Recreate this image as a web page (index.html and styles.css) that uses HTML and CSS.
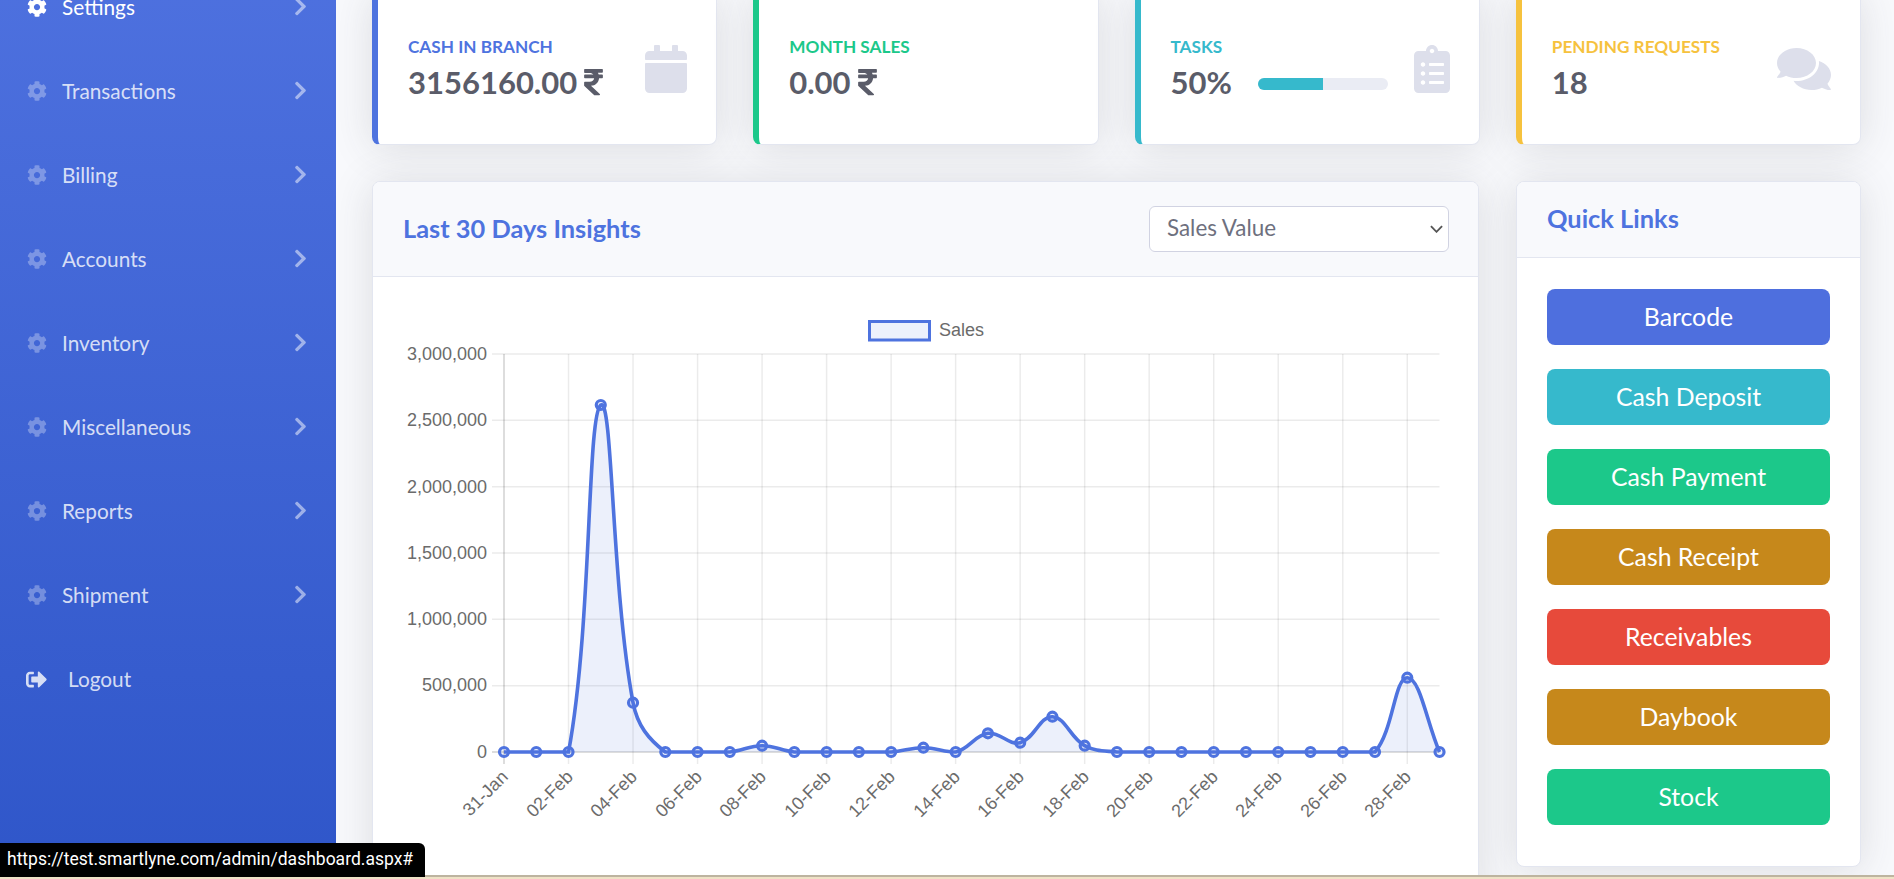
FILE: index.html
```html
<!DOCTYPE html>
<html lang="en">
<head>
<meta charset="utf-8">
<title>Dashboard</title>
<link rel="stylesheet" href="styles.css">
</head>
<body>
<svg class="defs" width="0" height="0" aria-hidden="true">
  <symbol id="i-cog" viewBox="0 0 512 512"><path d="M487.4 315.7l-42.6-24.6c4.3-23.2 4.3-47 0-70.2l42.6-24.6c4.9-2.8 7.1-8.6 5.5-14-11.1-35.6-30-67.8-54.7-94.6-3.8-4.1-10-5.1-14.8-2.3L380.8 110c-17.9-15.4-38.5-27.3-60.8-35.1V25.8c0-5.6-3.9-10.5-9.4-11.7-36.7-8.2-74.3-7.8-109.2 0-5.5 1.2-9.4 6.1-9.4 11.7V75c-22.2 7.9-42.8 19.8-60.8 35.1L88.7 85.5c-4.9-2.8-11-1.9-14.8 2.3-24.7 26.7-43.6 58.9-54.7 94.6-1.7 5.4.6 11.2 5.5 14L67.3 221c-4.3 23.2-4.3 47 0 70.2l-42.6 24.6c-4.9 2.8-7.1 8.6-5.5 14 11.1 35.6 30 67.8 54.7 94.6 3.8 4.1 10 5.1 14.8 2.3l42.6-24.6c17.9 15.4 38.5 27.3 60.8 35.1v49.2c0 5.6 3.9 10.5 9.4 11.7 36.7 8.2 74.3 7.8 109.2 0 5.5-1.2 9.4-6.1 9.4-11.7v-49.2c22.2-7.9 42.8-19.8 60.8-35.1l42.6 24.6c4.9 2.8 11 1.9 14.8-2.3 24.7-26.7 43.6-58.9 54.7-94.6 1.5-5.5-.7-11.3-5.6-14.1zM256 336c-44.1 0-80-35.9-80-80s35.9-80 80-80 80 35.9 80 80-35.9 80-80 80z"/></symbol>
  <symbol id="i-chev" viewBox="0 0 320 512"><path d="M285.476 272.971L91.132 467.314c-9.373 9.373-24.569 9.373-33.941 0l-22.667-22.667c-9.357-9.357-9.375-24.522-.04-33.901L188.505 256 34.484 101.255c-9.335-9.379-9.317-24.544.04-33.901l22.667-22.667c9.373-9.373 24.569-9.373 33.941 0L285.475 239.03c9.373 9.372 9.373 24.568.001 33.941z"/></symbol>
  <symbol id="i-out" viewBox="0 0 512 512"><path d="M497 273L329 441c-15 15-41 4.5-41-17v-96H152c-13.3 0-24-10.7-24-24v-96c0-13.3 10.7-24 24-24h136V88c0-21.4 25.9-32 41-17l168 168c9.3 9.4 9.3 24.6 0 34zM192 436v-40c0-6.6-5.4-12-12-12H96c-17.7 0-32-14.3-32-32V160c0-17.7 14.3-32 32-32h84c6.6 0 12-5.4 12-12V76c0-6.6-5.4-12-12-12H96c-53 0-96 43-96 96v192c0 53 43 96 96 96h84c6.6 0 12-5.4 12-12z"/></symbol>
  <symbol id="i-rupee" viewBox="0 0 320 512"><path d="M308 96c6.627 0 12-5.373 12-12V44c0-6.627-5.373-12-12-12H12C5.373 32 0 37.373 0 44v44.748c0 6.627 5.373 12 12 12h85.28c27.308 0 48.261 9.958 60.97 27.252H12c-6.627 0-12 5.373-12 12v40c0 6.627 5.373 12 12 12h158.757c-6.217 36.086-32.961 58.632-74.757 58.632H12c-6.627 0-12 5.373-12 12v53.012c0 3.349 1.4 6.546 3.861 8.818l165.052 152.356a12.001 12.001 0 0 0 8.139 3.182h82.562c10.924 0 16.166-13.408 8.139-20.818L116.871 319.906c76.499-2.34 131.144-53.395 138.318-127.906H308c6.627 0 12-5.373 12-12v-40c0-6.627-5.373-12-12-12h-58.69c-3.486-11.541-8.28-22.246-14.252-32H308z"/></symbol>
  <symbol id="i-cal" viewBox="0 0 448 512"><path d="M12 192h424c6.6 0 12 5.4 12 12v260c0 26.5-21.5 48-48 48H48c-26.5 0-48-21.5-48-48V204c0-6.6 5.4-12 12-12zm436-44v-36c0-26.5-21.5-48-48-48h-48V12c0-6.6-5.4-12-12-12h-40c-6.6 0-12 5.4-12 12v52H160V12c0-6.6-5.4-12-12-12h-40c-6.6 0-12 5.4-12 12v52H48C21.5 64 0 85.5 0 112v36c0 6.6 5.4 12 12 12h424c6.6 0 12-5.4 12-12z"/></symbol>
  <symbol id="i-clip" viewBox="0 0 384 512"><path d="M336 64h-80c0-35.3-28.7-64-64-64s-64 28.7-64 64H48C21.5 64 0 85.5 0 112v352c0 26.5 21.5 48 48 48h288c26.5 0 48-21.5 48-48V112c0-26.5-21.5-48-48-48zM96 424c-13.3 0-24-10.7-24-24s10.7-24 24-24 24 10.7 24 24-10.7 24-24 24zm0-96c-13.3 0-24-10.7-24-24s10.7-24 24-24 24 10.7 24 24-10.7 24-24 24zm0-96c-13.3 0-24-10.7-24-24s10.7-24 24-24 24 10.7 24 24-10.7 24-24 24zm96-192c13.3 0 24 10.7 24 24s-10.7 24-24 24-24-10.7-24-24 10.7-24 24-24zm128 368c0 4.4-3.6 8-8 8H168c-4.4 0-8-3.6-8-8v-16c0-4.4 3.6-8 8-8h144c4.4 0 8 3.6 8 8v16zm0-96c0 4.4-3.6 8-8 8H168c-4.4 0-8-3.6-8-8v-16c0-4.4 3.6-8 8-8h144c4.4 0 8 3.6 8 8v16zm0-96c0 4.4-3.6 8-8 8H168c-4.4 0-8-3.6-8-8v-16c0-4.4 3.6-8 8-8h144c4.4 0 8 3.6 8 8v16z"/></symbol>
  <symbol id="i-com" viewBox="0 0 576 512"><path d="M416 192c0-88.4-93.1-160-208-160S0 103.6 0 192c0 34.3 14.1 65.9 38 92-13.4 30.2-35.5 54.2-35.8 54.5-2.2 2.3-2.8 5.7-1.5 8.7S4.8 352 8 352c36.6 0 66.9-12.3 88.7-25 32.2 15.7 70.3 25 111.3 25 114.9 0 208-71.6 208-160zm122 220c23.9-26 38-57.7 38-92 0-66.9-53.5-124.2-129.3-148.1.9 6.6 1.3 13.3 1.3 20.1 0 105.9-107.7 192-240 192-10.8 0-21.3-.8-31.7-1.9C207.8 439.6 281.8 480 368 480c41 0 79.1-9.2 111.3-25 21.8 12.7 52.1 25 88.7 25 3.2 0 6.1-1.9 7.3-4.8 1.3-2.9.7-6.3-1.5-8.7-.3-.3-22.4-24.2-35.8-54.5z"/></symbol>
</svg>

<div class="app">
  <nav class="sidebar">
    <a class="nav-item active" href="#"><svg class="nav-icon"><use href="#i-cog"/></svg><span class="nav-text">Settings</span><svg class="nav-chev"><use href="#i-chev"/></svg></a>
    <a class="nav-item" href="#"><svg class="nav-icon"><use href="#i-cog"/></svg><span class="nav-text">Transactions</span><svg class="nav-chev"><use href="#i-chev"/></svg></a>
    <a class="nav-item" href="#"><svg class="nav-icon"><use href="#i-cog"/></svg><span class="nav-text">Billing</span><svg class="nav-chev"><use href="#i-chev"/></svg></a>
    <a class="nav-item" href="#"><svg class="nav-icon"><use href="#i-cog"/></svg><span class="nav-text">Accounts</span><svg class="nav-chev"><use href="#i-chev"/></svg></a>
    <a class="nav-item" href="#"><svg class="nav-icon"><use href="#i-cog"/></svg><span class="nav-text">Inventory</span><svg class="nav-chev"><use href="#i-chev"/></svg></a>
    <a class="nav-item" href="#"><svg class="nav-icon"><use href="#i-cog"/></svg><span class="nav-text">Miscellaneous</span><svg class="nav-chev"><use href="#i-chev"/></svg></a>
    <a class="nav-item" href="#"><svg class="nav-icon"><use href="#i-cog"/></svg><span class="nav-text">Reports</span><svg class="nav-chev"><use href="#i-chev"/></svg></a>
    <a class="nav-item" href="#"><svg class="nav-icon"><use href="#i-cog"/></svg><span class="nav-text">Shipment</span><svg class="nav-chev"><use href="#i-chev"/></svg></a>
    <a class="nav-item logout" href="#"><svg class="nav-icon-out"><use href="#i-out"/></svg><span class="nav-text">Logout</span></a>
  </nav>

  <main class="main">
    <section class="stats">
      <div class="stat stat-blue">
        <div class="stat-body">
          <div class="stat-label">Cash in branch</div>
          <div class="stat-value">3156160.00 <svg class="rupee"><use href="#i-rupee"/></svg></div>
        </div>
        <svg class="stat-icon w42"><use href="#i-cal"/></svg>
      </div>
      <div class="stat stat-green">
        <div class="stat-body">
          <div class="stat-label">Month Sales</div>
          <div class="stat-value">0.00 <svg class="rupee"><use href="#i-rupee"/></svg></div>
        </div>
      </div>
      <div class="stat stat-teal">
        <div class="stat-body">
          <div class="stat-label">Tasks</div>
          <div class="stat-row">
            <div class="stat-value">50%</div>
            <div class="progress"><div class="progress-bar"></div></div>
          </div>
        </div>
        <svg class="stat-icon w36"><use href="#i-clip"/></svg>
      </div>
      <div class="stat stat-yellow">
        <div class="stat-body">
          <div class="stat-label">Pending Requests</div>
          <div class="stat-value">18</div>
        </div>
        <svg class="stat-icon w54"><use href="#i-com"/></svg>
      </div>
    </section>

    <section class="panels">
      <div class="panel panel-chart">
        <header class="panel-head chart-head">
          <h2 class="panel-title">Last 30 Days Insights</h2>
          <div class="select-wrap">
            <select class="select"><option>Sales Value</option></select>
            <svg class="select-chev" viewBox="0 0 14 8"><polyline points="1,1 7,7 13,1"/></svg>
          </div>
        </header>
        <div class="chart-wrap">
          <svg id="chart" class="chart" width="1107" height="598" viewBox="372 277 1107 598">
            <g id="grid"></g>
            <g id="series"></g>
            <rect class="legend-box" x="869.5" y="321.5" width="60" height="18.5"/>
            <text class="legend-text" x="939" y="336">Sales</text>
            <g class="y-labels">
              <text x="487" y="360">3,000,000</text>
              <text x="487" y="426">2,500,000</text>
              <text x="487" y="493">2,000,000</text>
              <text x="487" y="559">1,500,000</text>
              <text x="487" y="625">1,000,000</text>
              <text x="487" y="691">500,000</text>
              <text x="487" y="758">0</text>
            </g>
            <g class="x-labels">
              <text transform="translate(509 778) rotate(-45)">31-Jan</text>
              <text transform="translate(574 778) rotate(-45)">02-Feb</text>
              <text transform="translate(638 778) rotate(-45)">04-Feb</text>
              <text transform="translate(703 778) rotate(-45)">06-Feb</text>
              <text transform="translate(767 778) rotate(-45)">08-Feb</text>
              <text transform="translate(832 778) rotate(-45)">10-Feb</text>
              <text transform="translate(896 778) rotate(-45)">12-Feb</text>
              <text transform="translate(961 778) rotate(-45)">14-Feb</text>
              <text transform="translate(1025 778) rotate(-45)">16-Feb</text>
              <text transform="translate(1090 778) rotate(-45)">18-Feb</text>
              <text transform="translate(1154 778) rotate(-45)">20-Feb</text>
              <text transform="translate(1219 778) rotate(-45)">22-Feb</text>
              <text transform="translate(1283 778) rotate(-45)">24-Feb</text>
              <text transform="translate(1348 778) rotate(-45)">26-Feb</text>
              <text transform="translate(1412 778) rotate(-45)">28-Feb</text>
            </g>
          </svg>
        </div>
      </div>

      <aside class="panel panel-links">
        <header class="panel-head links-head">
          <h2 class="panel-title">Quick Links</h2>
        </header>
        <div class="links">
          <a class="btn btn-primary" href="#">Barcode</a>
          <a class="btn btn-info" href="#">Cash Deposit</a>
          <a class="btn btn-success" href="#">Cash Payment</a>
          <a class="btn btn-warning" href="#">Cash Receipt</a>
          <a class="btn btn-danger" href="#">Receivables</a>
          <a class="btn btn-warning" href="#">Daybook</a>
          <a class="btn btn-success" href="#">Stock</a>
        </div>
      </aside>
    </section>
  </main>
</div>

<div class="status-url">https://test.smartlyne.com/admin/dashboard.aspx#</div>
<div class="desk-strip"></div>
<script src="chart.js"></script>
</body>
</html>
```

FILE: styles.css
```css
* { box-sizing: border-box; }
html, body { margin: 0; height: 879px; overflow: hidden; }
body {
  font-family: "Lato", "Noto Sans", sans-serif;
  background: #f8f9fc;
  color: #5a5c69;
}
a { text-decoration: none; }
.defs { display: block; height: 0; }

.app { display: flex; height: 879px; }

/* sidebar */
.sidebar {
  width: 336px;
  flex: none;
  background: linear-gradient(180deg, #4e71df 0%, #2f56c9 100%);
  margin-top: -35px;
  padding-left: 27px;
  padding-right: 29px;
  height: 914px;
}
.nav-item {
  display: flex;
  align-items: center;
  height: 84px;
  color: rgba(255,255,255,.8);
  font-size: 20.8px;
}
.nav-icon { width: 20px; height: 20px; fill: rgba(255,255,255,.3); margin-right: 15px; flex: none; }
.nav-text { flex: 1; padding-bottom: 1px; }
.nav-chev { width: 13px; height: 21px; fill: rgba(255,255,255,.5); flex: none; margin-top: -2px; }
.nav-item.active { color: #fff; }
.nav-item.active .nav-icon { fill: #fff; }
.nav-icon-out { width: 21px; height: 21px; fill: rgba(255,255,255,.8); margin-right: 21px; margin-left: -1px; flex: none; }

/* main */
.main {
  flex: 1;
  min-width: 0;
  padding: 0 33px 0 36px;
  margin-top: -8px;
}
.stats {
  display: grid;
  grid-template-columns: repeat(4, 1fr);
  gap: 36px;
}
.stat {
  height: 153px;
  background: #fff;
  border: 1px solid #e3e6f0;
  border-left-width: 6px;
  border-radius: 8px;
  box-shadow: 0 3px 42px rgba(58,59,69,.15);
  display: flex;
  align-items: center;
  padding: 0 29px 0 30px;
}
.stat-blue { border-left-color: #4e73df; }
.stat-green { border-left-color: #1cc88a; }
.stat-teal { border-left-color: #36b9cc; }
.stat-yellow { border-left-color: #f6c23e; }
.stat-body { flex: 1; min-width: 0; }
.stat-label {
  font-size: 17.2px;
  font-weight: 700;
  text-transform: uppercase;
  line-height: 20px;
  margin-bottom: 7px;
}
.stat-blue .stat-label { color: #4e73df; }
.stat-green .stat-label { color: #1cc88a; }
.stat-teal .stat-label { color: #36b9cc; }
.stat-yellow .stat-label { color: #f6c23e; }
.stat-value {
  font-size: 31px;
  font-weight: 700;
  line-height: 36px;
  color: #5a5c69;
  display: flex;
  align-items: center;
  gap: 7px;
}
.rupee { width: 19px; height: 30px; fill: #5a5c69; flex: none; }
.stat-row { display: flex; align-items: center; gap: 26px; }
.progress { width: 130px; height: 12px; background: #eaecf4; border-radius: 6px; overflow: hidden; margin-top: 3px; }
.progress-bar { width: 50%; height: 100%; background: #36b9cc; }
.stat-icon { height: 48px; fill: #dddfeb; flex: none; }
.w42 { width: 42px; }
.w36 { width: 36px; }
.w54 { width: 54px; }

/* panels */
.panels {
  display: grid;
  grid-template-columns: 1107px 345px;
  gap: 37px;
  margin-top: 36px;
  align-items: start;
}
.panel {
  background: #fff;
  border: 1px solid #e3e6f0;
  border-radius: 8px;
  box-shadow: 0 3px 42px rgba(58,59,69,.15);
  overflow: hidden;
}
.panel-chart { height: 760px; }
.panel-links { height: 686px; }
.panel-head {
  background: #f8f9fc;
  border-bottom: 1px solid #e3e6f0;
  display: flex;
  align-items: center;
  justify-content: space-between;
  padding: 0 30px;
}
.chart-head { height: 95px; }
.links-head { height: 76px; }
.panel-title { margin: 0 0 3px; font-size: 25.4px; font-weight: 700; color: #4e73df; }
.select-wrap { position: relative; width: 300px; height: 46px; margin-right: -1px; }
.select {
  appearance: none;
  -webkit-appearance: none;
  display: block;
  width: 100%;
  height: 100%;
  font-family: inherit;
  font-size: 22.4px;
  color: #6e707e;
  background: #fff;
  border: 1.5px solid #d1d3e2;
  border-radius: 6px;
  padding: 0 0 3px 17px;
}
.select-chev {
  position: absolute;
  right: 6px;
  top: 19px;
  width: 13px;
  height: 8px;
  fill: none;
  stroke: #555;
  stroke-width: 2;
  pointer-events: none;
}
.chart-wrap { height: 598px; margin-left: -1px; }
.chart { display: block; }
#chart text { font-family: "Liberation Sans", Arial, sans-serif; font-size: 18px; fill: #6b6b6b; }
.y-labels text { text-anchor: end; }
.x-labels text { text-anchor: end; }
.legend-box { fill: rgba(78,115,223,.1); stroke: #4e73df; stroke-width: 3; }
.grid-line { stroke: rgba(0,0,0,.08); stroke-width: 1.5; }
.axis-line { stroke: rgba(0,0,0,.18); stroke-width: 1.5; }
.area { fill: rgba(78,115,223,.11); stroke: none; }
.line { fill: none; stroke: #4e73df; stroke-width: 3.6; }
.dot { fill: rgba(78,115,223,.1); stroke: #4e73df; stroke-width: 3.2; }

.links {
  display: flex;
  flex-direction: column;
  gap: 24px;
  padding: 31px 30px 0;
}
.btn {
  display: flex;
  align-items: center;
  justify-content: center;
  height: 56px;
  padding-bottom: 2px;
  border-radius: 8px;
  color: #fff;
  font-size: 24.8px;
}
.btn-primary { background: #4e6fde; }
.btn-info { background: #36b9cc; }
.btn-success { background: #1cc88a; }
.btn-warning { background: #c6881b; }
.btn-danger { background: #e74a3b; }

/* overlays */
.status-url {
  position: absolute;
  left: 0;
  top: 843px;
  width: 425px;
  height: 34px;
  background: #000;
  color: #fff;
  border-top-right-radius: 6px;
  font-family: "Roboto", "Noto Sans", sans-serif;
  font-size: 17.5px;
  line-height: 33px;
  padding-left: 7px;
  white-space: nowrap;
  z-index: 3;
}
.desk-strip {
  position: absolute;
  left: 0;
  right: 0;
  top: 875px;
  height: 4px;
  background: #efe2c6;
  border-top: 2px solid #bdb4a0;
  z-index: 2;
}
```

FILE: chart.js
```js
(function () {
  var NS = "http://www.w3.org/2000/svg";
  var x0 = 504, step = 32.26, base = 752, top = 354, right = 1439.5;
  var ys = [752,752,752,405,702.7,752,752,752,745.7,752,752,752,752,747.7,752,733.3,742.7,716.7,745.7,752,752,752,752,752,752,752,752,752,677.7,752];
  var pts = ys.map(function (y, i) { return { x: x0 + i * step, y: y }; });

  function el(name, attrs, parent) {
    var e = document.createElementNS(NS, name);
    for (var k in attrs) e.setAttribute(k, attrs[k]);
    parent.appendChild(e);
    return e;
  }

  var grid = document.getElementById("grid");
  pts.forEach(function (p, i) {
    if (i % 2) return;
    el("line", { x1: p.x, x2: p.x, y1: top, y2: 764, "class": i === 0 ? "axis-line" : "grid-line" }, grid);
  });
  for (var g = 0; g <= 6; g++) {
    var gy = top + g * 66.33;
    el("line", { x1: 492, x2: right, y1: gy, y2: gy, "class": g === 6 ? "axis-line" : "grid-line" }, grid);
  }

  /* spline with tension .4, control points capped to the plot area */
  var t = 0.4;
  function clampY(y) { return Math.max(top, Math.min(base, y)); }
  pts.forEach(function (p, i) {
    var a = pts[i - 1] || p, b = pts[i + 1] || p;
    var d1 = Math.hypot(p.x - a.x, p.y - a.y), d2 = Math.hypot(b.x - p.x, b.y - p.y);
    var s1 = d1 / (d1 + d2 || 1), s2 = d2 / (d1 + d2 || 1);
    p.c1x = p.x - t * s1 * (b.x - a.x);
    p.c1y = clampY(p.y - t * s1 * (b.y - a.y));
    p.c2x = p.x + t * s2 * (b.x - a.x);
    p.c2y = clampY(p.y + t * s2 * (b.y - a.y));
  });
  var d = "M" + pts[0].x + " " + pts[0].y;
  for (var i = 1; i < pts.length; i++) {
    var p = pts[i - 1], q = pts[i];
    d += "C" + p.c2x + " " + p.c2y + " " + q.c1x + " " + q.c1y + " " + q.x + " " + q.y;
  }
  var series = document.getElementById("series");
  el("path", { d: d + "L" + pts[pts.length - 1].x + " " + base + "L" + pts[0].x + " " + base + "Z", "class": "area" }, series);
  el("path", { d: d, "class": "line" }, series);
  pts.forEach(function (p) {
    el("circle", { cx: p.x, cy: p.y, r: 4.5, "class": "dot" }, series);
  });
})();
```
